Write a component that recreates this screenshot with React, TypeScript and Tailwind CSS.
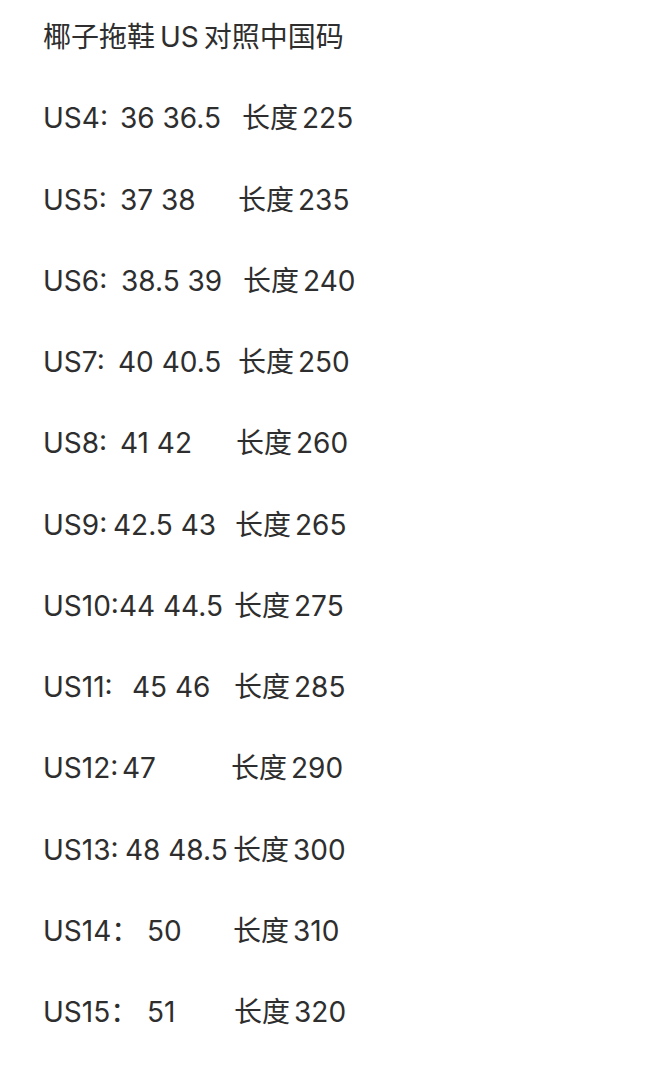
import React from "react";

type Row = { l: string; v: string; n: string; lw: string; tw: string };

const rows: Row[] = [
  { l: "US4:", v: "36 36.5", n: "225", lw: "w-[77px]", tw: "w-[199px]" },
  { l: "US5:", v: "37 38", n: "235", lw: "w-[77px]", tw: "w-[195px]" },
  { l: "US6:", v: "38.5 39", n: "240", lw: "w-[78px]", tw: "w-[200px]" },
  { l: "US7:", v: "40 40.5", n: "250", lw: "w-[75px]", tw: "w-[195px]" },
  { l: "US8:", v: "41 42", n: "260", lw: "w-[77px]", tw: "w-[193px]" },
  { l: "US9:", v: "42.5 43", n: "265", lw: "w-[70px]", tw: "w-[192px]" },
  { l: "US10:", v: "44 44.5", n: "275", lw: "w-auto", tw: "w-[191px]" },
  { l: "US11:", v: "45 46", n: "285", lw: "w-[89px]", tw: "w-[191px]" },
  { l: "US12:", v: "47", n: "290", lw: "w-[79px]", tw: "w-[188px]" },
  { l: "US13:", v: "48 48.5", n: "300", lw: "w-[82px]", tw: "w-[190px]" },
  { l: "US14：", v: "50", n: "310", lw: "w-[104px]", tw: "w-[190px]" },
  { l: "US15：", v: "51", n: "320", lw: "w-[104px]", tw: "w-[191px]" },
];

export default function App() {
  return (
    <div
      className="w-[650px] h-[1080px] bg-white text-[#2e2e2e] text-[28px] leading-[40px] pl-[43px] pt-[17px] flex flex-col gap-[41.25px] overflow-hidden"
      style={{ fontFamily: '"Inter", "Noto Sans CJK SC", sans-serif' }}
    >
      <div className="whitespace-nowrap flex">
        <span>椰子拖鞋</span>
        <span className="mx-[5px]">US</span>
        <span>对照中国码</span>
      </div>
      {rows.map((r) => (
        <div key={r.l} className="flex whitespace-nowrap">
          <div className={`${r.tw} shrink-0 flex`}>
            <span className={`${r.lw} shrink-0`}>{r.l}</span>
            <span className="shrink-0">{r.v}</span>
          </div>
          <span className="shrink-0">长度</span>
          <span className="shrink-0 ml-[4px]">{r.n}</span>
        </div>
      ))}
    </div>
  );
}
